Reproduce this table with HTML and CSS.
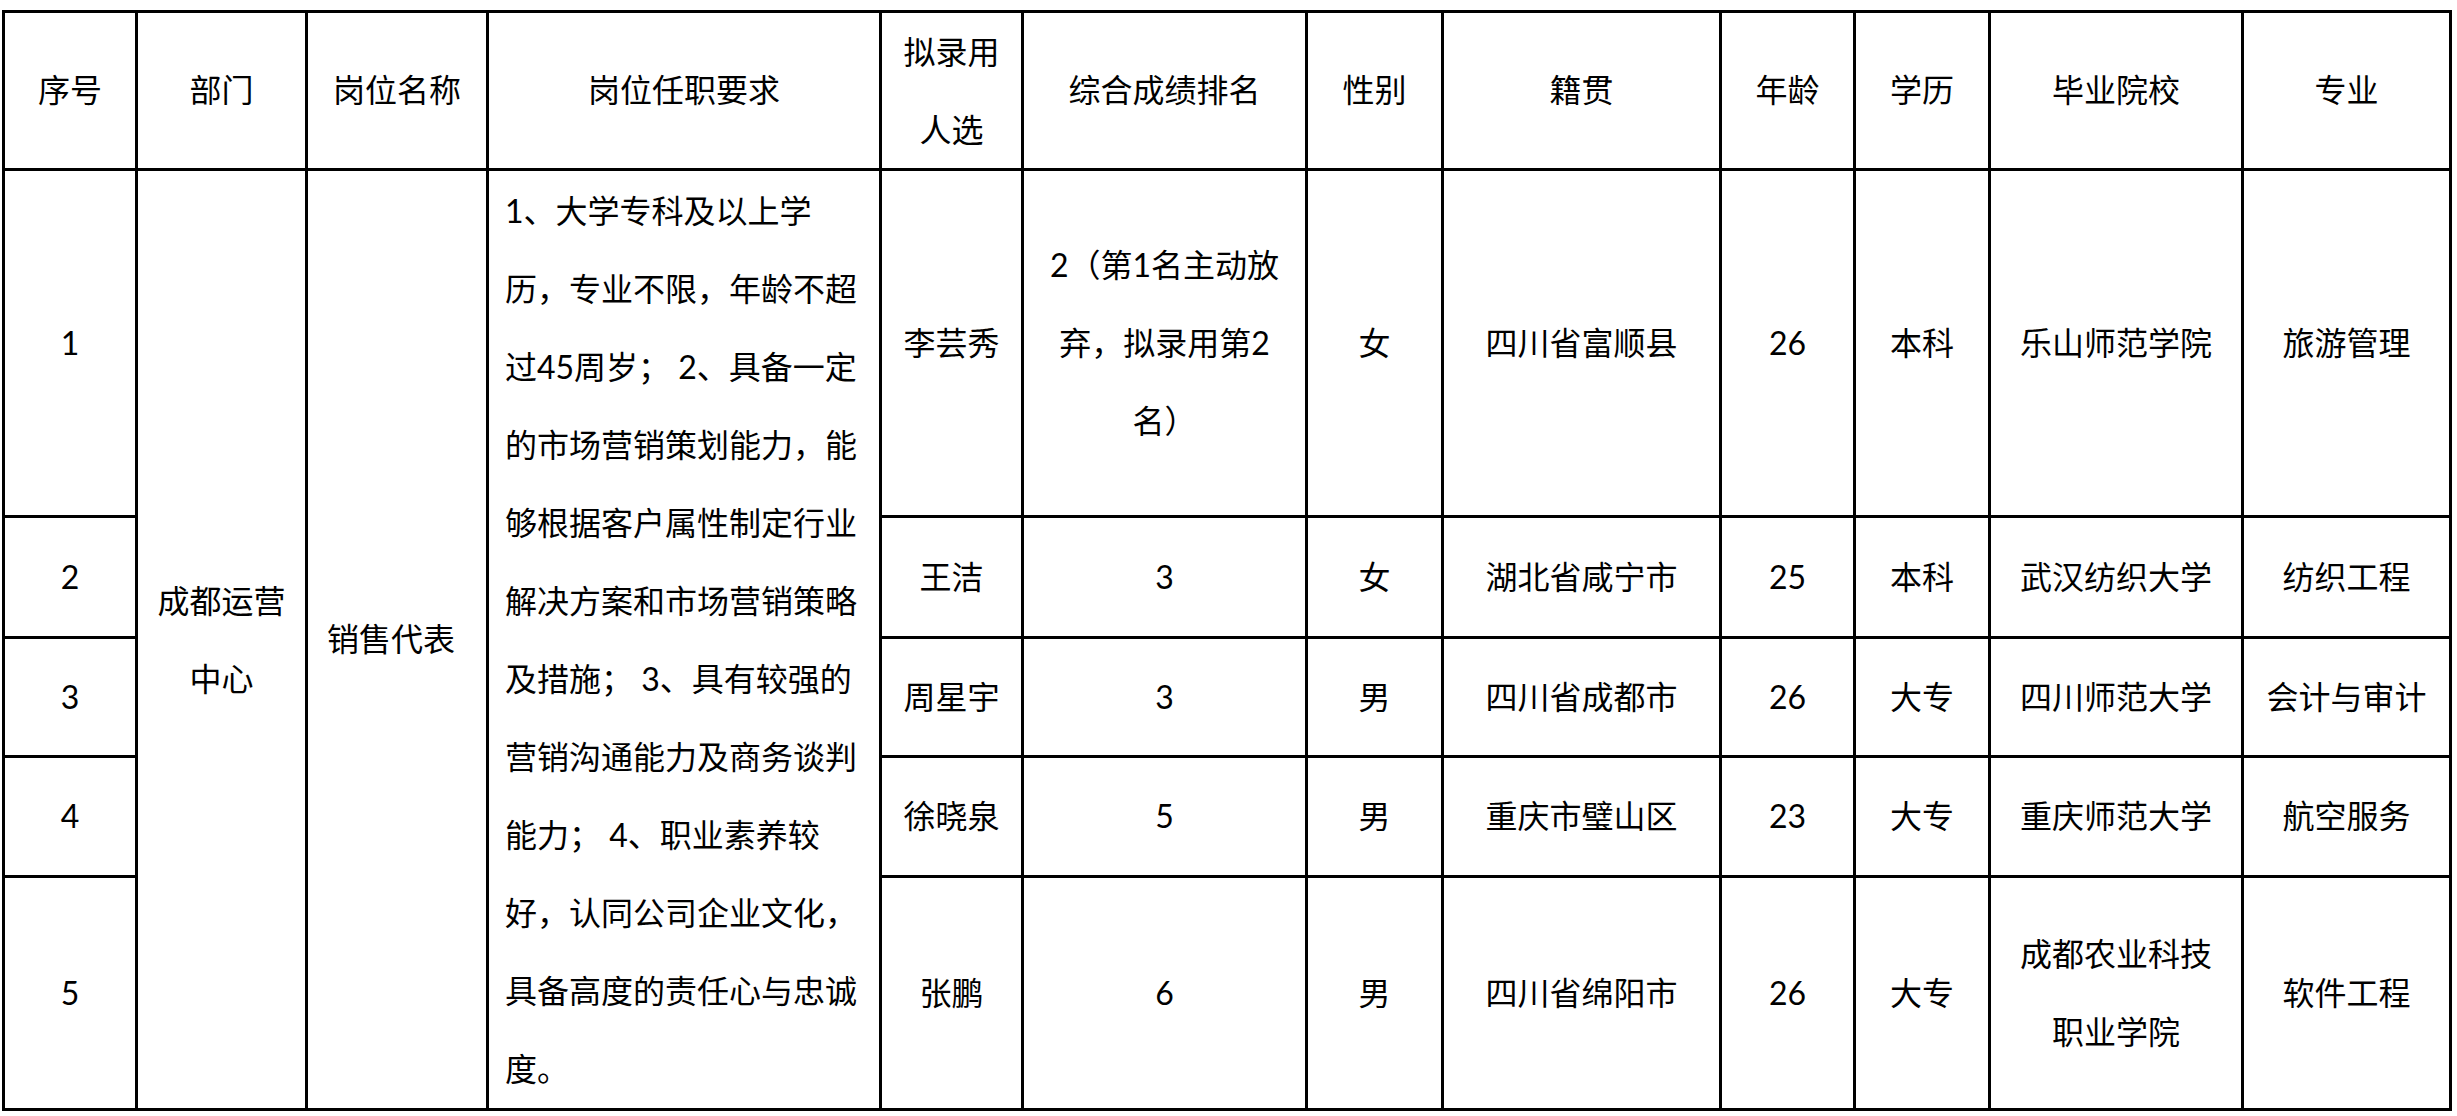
FILE: index.html
```html
<!DOCTYPE html>
<html lang="zh-CN">
<head>
<meta charset="utf-8">
<title>拟录用人员名单</title>
<link rel="stylesheet" href="styles.css">
</head>
<body>
<div class="sheet">
  <div class="grid">
    <div class="cell">序号</div>
    <div class="cell">部门</div>
    <div class="cell">岗位名称</div>
    <div class="cell">岗位任职要求</div>
    <div class="cell ml">拟录用<br>人选</div>
    <div class="cell">综合成绩排名</div>
    <div class="cell">性别</div>
    <div class="cell">籍贯</div>
    <div class="cell">年龄</div>
    <div class="cell">学历</div>
    <div class="cell">毕业院校</div>
    <div class="cell">专业</div>

    <div class="cell">1</div>
    <div class="cell ml span-all dept">成都运营<br>中心</div>
    <div class="cell span-all post">销售代表</div>
    <div class="cell span-all req">1、大学专科及以上学<br>历，专业不限，年龄不超<br>过45周岁； 2、具备一定<br>的市场营销策划能力，能<br>够根据客户属性制定行业<br>解决方案和市场营销策略<br>及措施； 3、具有较强的<br>营销沟通能力及商务谈判<br>能力； 4、职业素养较<br>好，认同公司企业文化，<br>具备高度的责任心与忠诚<br>度。</div>
    <div class="cell">李芸秀</div>
    <div class="cell ml">2（第1名主动放<br>弃，拟录用第2<br>名）</div>
    <div class="cell">女</div>
    <div class="cell">四川省富顺县</div>
    <div class="cell">26</div>
    <div class="cell">本科</div>
    <div class="cell">乐山师范学院</div>
    <div class="cell">旅游管理</div>

    <div class="cell">2</div>
    <div class="cell">王洁</div>
    <div class="cell">3</div>
    <div class="cell">女</div>
    <div class="cell">湖北省咸宁市</div>
    <div class="cell">25</div>
    <div class="cell">本科</div>
    <div class="cell">武汉纺织大学</div>
    <div class="cell">纺织工程</div>

    <div class="cell">3</div>
    <div class="cell">周星宇</div>
    <div class="cell">3</div>
    <div class="cell">男</div>
    <div class="cell">四川省成都市</div>
    <div class="cell">26</div>
    <div class="cell">大专</div>
    <div class="cell">四川师范大学</div>
    <div class="cell">会计与审计</div>

    <div class="cell">4</div>
    <div class="cell">徐晓泉</div>
    <div class="cell">5</div>
    <div class="cell">男</div>
    <div class="cell">重庆市璧山区</div>
    <div class="cell">23</div>
    <div class="cell">大专</div>
    <div class="cell">重庆师范大学</div>
    <div class="cell">航空服务</div>

    <div class="cell">5</div>
    <div class="cell">张鹏</div>
    <div class="cell">6</div>
    <div class="cell">男</div>
    <div class="cell">四川省绵阳市</div>
    <div class="cell">26</div>
    <div class="cell">大专</div>
    <div class="cell ml">成都农业科技<br>职业学院</div>
    <div class="cell">软件工程</div>
  </div>
</div>
</body>
</html>
```

FILE: styles.css
```css
html, body {
  margin: 0;
  padding: 0;
  background: #ffffff;
}

body {
  font-family: "Lato", "Noto Sans CJK SC", sans-serif;
  font-size: 32px;
  color: #000000;
}

.sheet {
  padding: 10px 0 0 2px;
}

.grid {
  display: grid;
  width: max-content;
  grid-template-columns: 130px 167px 178px 390px 139px 281px 133px 275px 131px 132px 250px 205px;
  grid-template-rows: 155px 344px 118px 116px 117px 230px;
  gap: 3px;
  padding: 3px;
  background: #000000;
}

.cell {
  background: #ffffff;
  display: flex;
  align-items: center;
  justify-content: center;
  text-align: center;
  line-height: 1.2;
  white-space: nowrap;
}

.ml {
  line-height: 78px;
}

.span-all {
  grid-row: 2 / span 5;
}

.dept {
  grid-column: 2;
}

.post {
  grid-column: 3;
  justify-content: flex-start;
  padding-left: 19px;
}

.req {
  grid-column: 4;
  justify-content: flex-start;
  text-align: left;
  line-height: 78px;
  padding-left: 16px;
}
```
